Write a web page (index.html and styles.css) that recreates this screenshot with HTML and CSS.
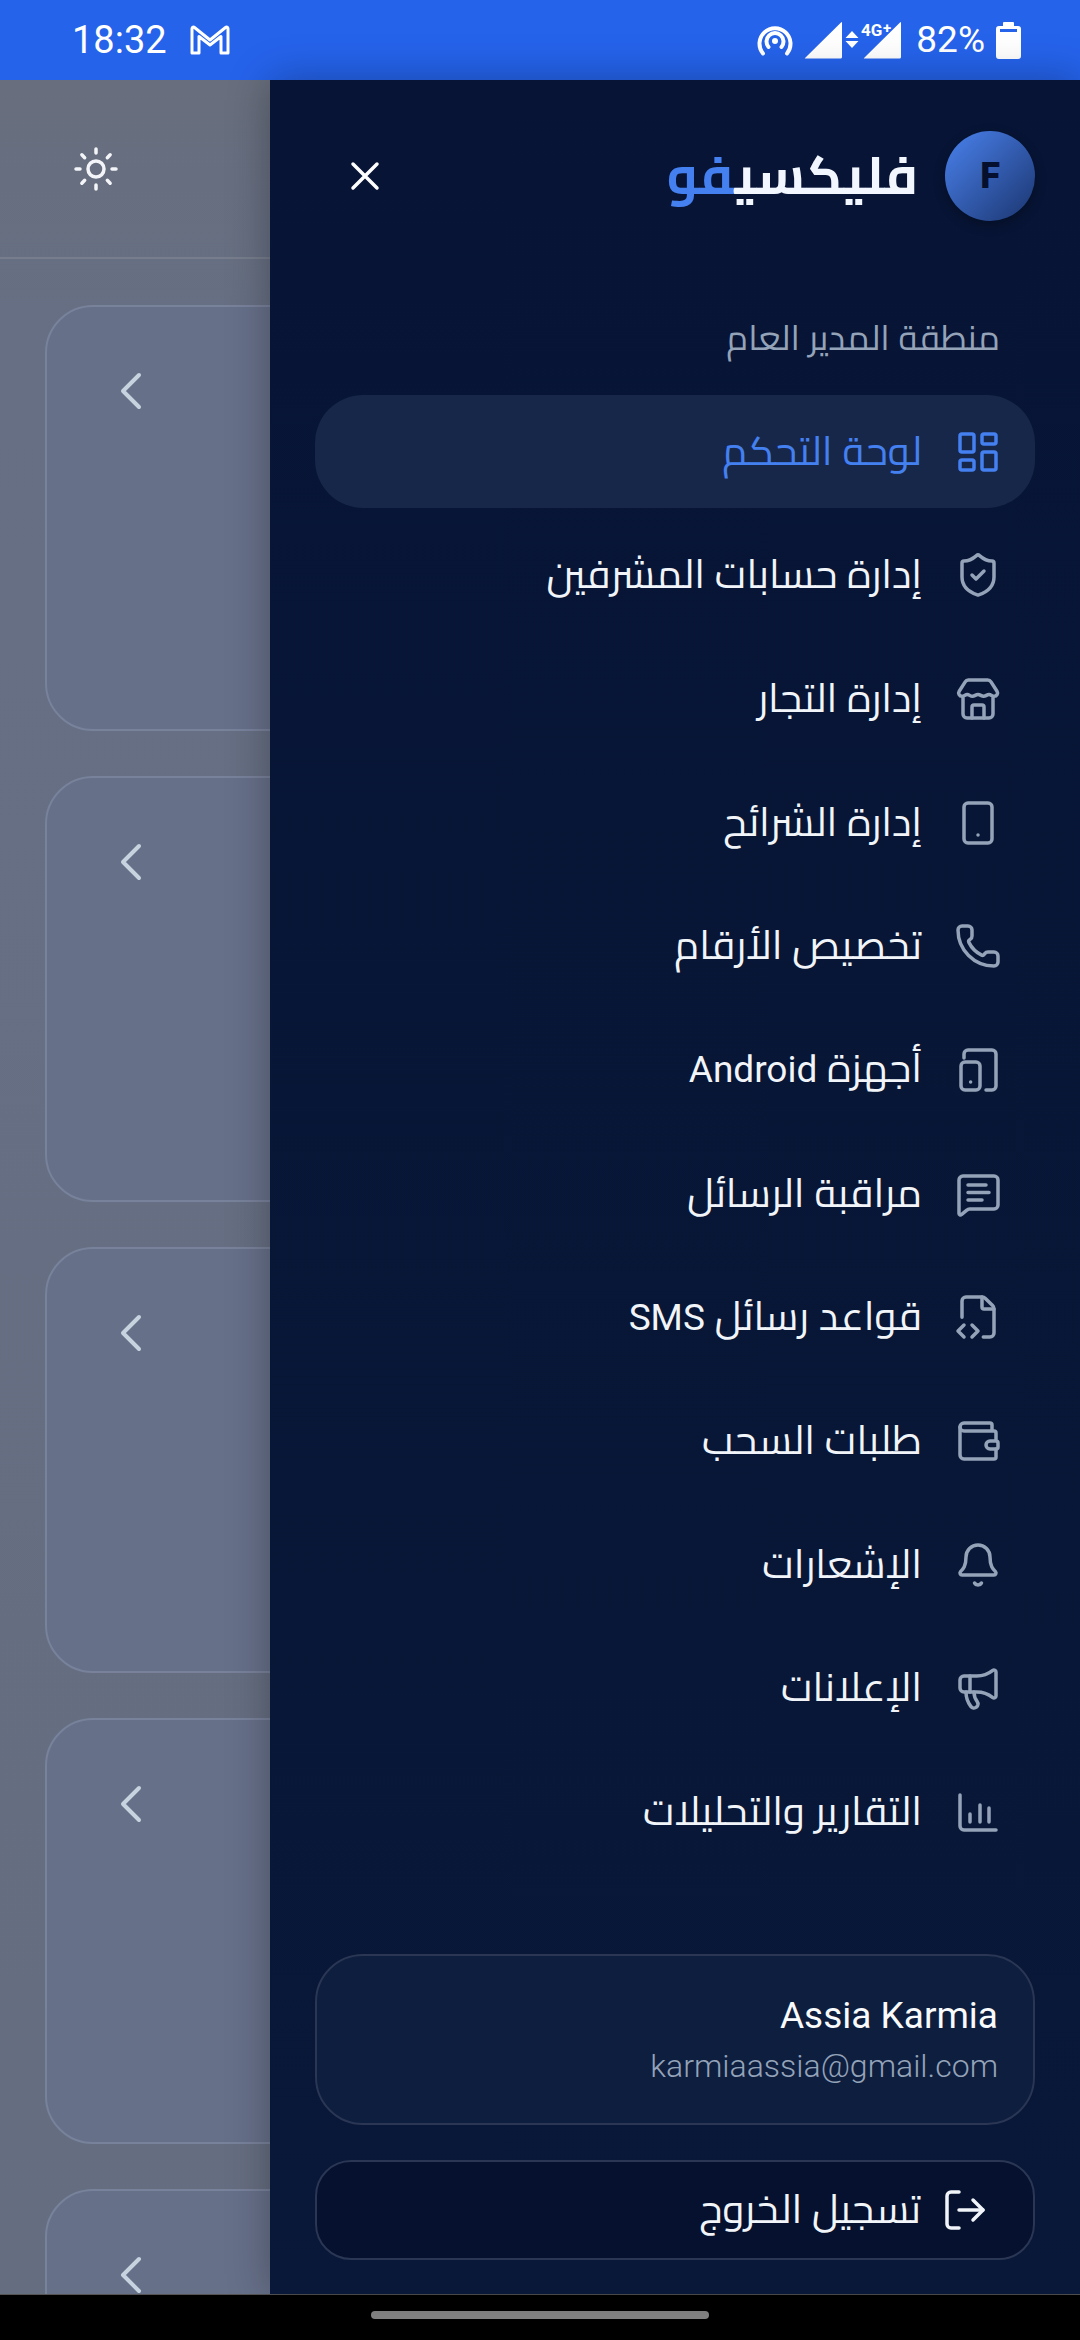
FILE: index.html
```html
<!DOCTYPE html>
<html lang="ar">
<head>
<meta charset="utf-8">
<title>فليكسيفو</title>
<link rel="stylesheet" href="styles.css">
</head>
<body>
<div class="status">
  <div class="status-left">
    <span class="time">18:32</span>
    <svg class="gm" viewBox="0 0 40 30"><path d="M2 28V3.500a1.500 1.500 0 0 1 2.500-1L20 15 35.500 2.500a1.500 1.500 0 0 1 2.500 1V28h-7V11.500L20 20 9 11.500V28z"/></svg>
  </div>
  <div class="status-right">
    <svg class="hot" viewBox="0 0 36 32"><path d="M6 29.500A15.500 15.500 0 1 1 30 29.500M11.500 23A8.500 8.500 0 1 1 24.500 23"/><circle cx="18" cy="17" r="3"/></svg>
    <svg class="sig" viewBox="0 -6 98 50">
      <path class="fill" d="M1 37 37 1.500Q38 .5 38 2V36q0 1.500-1.500 1.500H1.500Q.3 37.500 1 37z"/>
      <path class="fill" d="M48 10l6.500 7h-13zM48 27l6.500-7h-13z"/>
      <path class="fill" d="M60 37 96 1.500Q97 .5 97 2V36q0 1.500-1.500 1.500H60.500Q59.300 37.500 60 37z"/>
      <text class="g4" x="57" y="15">4G</text><text class="gplus" x="79" y="12">+</text>
    </svg>
    <span class="pct">82%</span>
    <svg class="bat" viewBox="0 0 25 37"><path class="fill" d="M8 0h9a1 1 0 0 1 1 1v3h4a3 3 0 0 1 3 3v27a3 3 0 0 1-3 3H3a3 3 0 0 1-3-3V7a3 3 0 0 1 3-3h4V1a1 1 0 0 1 1-1z"/><rect class="batline" x="4" y="7" width="17" height="3"/></svg>
  </div>
</div>
<div class="main">
  <div class="backdrop">
    <div class="bd-head">
      <svg class="ic sun" viewBox="0 0 24 24"><circle cx="12" cy="12" r="4"/><path d="M12 2v2M12 20v2M4.930 4.930l1.410 1.410M17.660 17.660l1.410 1.410M2 12h2M20 12h2M6.340 17.660l-1.410 1.410M19.070 4.930l-1.410 1.410"/></svg>
    </div>
    <div class="bd-list">
      <div class="bd-card"><svg class="chev" viewBox="0 0 24 24"><path d="m15 18-6-6 6-6"/></svg></div>
      <div class="bd-card"><svg class="chev" viewBox="0 0 24 24"><path d="m15 18-6-6 6-6"/></svg></div>
      <div class="bd-card"><svg class="chev" viewBox="0 0 24 24"><path d="m15 18-6-6 6-6"/></svg></div>
      <div class="bd-card"><svg class="chev" viewBox="0 0 24 24"><path d="m15 18-6-6 6-6"/></svg></div>
      <div class="bd-card"><svg class="chev" viewBox="0 0 24 24"><path d="m15 18-6-6 6-6"/></svg></div>
    </div>
  </div>
  <aside class="drawer" dir="rtl">
    <div class="dr-head">
      <div class="avatar">F</div>
      <div class="logo"><span class="logo-a">فليكسي</span><span class="logo-b">فو</span></div>
      <svg class="ic close" viewBox="0 0 24 24"><path d="M18 6 6 18M6 6l12 12"/></svg>
    </div>
    <div class="section">منطقة المدير العام</div>
    <nav class="nav">
      <a class="row active"><svg class="ic" viewBox="0 0 24 24"><rect x="3" y="3" width="7" height="9" rx="1"/><rect x="14" y="3" width="7" height="5" rx="1"/><rect x="14" y="12" width="7" height="9" rx="1"/><rect x="3" y="16" width="7" height="5" rx="1"/></svg><span>لوحة التحكم</span></a>
      <a class="row"><svg class="ic" viewBox="0 0 24 24"><path d="M20 13c0 5-3.500 7.500-7.660 8.950a1 1 0 0 1-.67-.01C7.500 20.500 4 18 4 13V6a1 1 0 0 1 1-1c2 0 4.500-1.200 6.240-2.720a1.170 1.170 0 0 1 1.520 0C14.510 3.810 17 5 19 5a1 1 0 0 1 1 1z"/><path d="m9 12 2 2 4-4"/></svg><span>إدارة حسابات المشرفين</span></a>
      <a class="row"><svg class="ic" viewBox="0 0 24 24"><path d="M7.200 2.500h9.600a2 2 0 0 1 1.700.95l3 4.700c.7 1.100-.1 2.500-1.400 2.500-1.100 0-1.500-.9-2.600-.9s-1.500.9-2.700.9-1.600-.9-2.800-.9-1.600.9-2.800.9-1.500-.9-2.600-.9-1.500.9-2.600.9c-1.300 0-2.100-1.400-1.400-2.500l3-4.700a2 2 0 0 1 1.600-.95z"/><path d="M4.500 11.500v8a2 2 0 0 0 2 2h11a2 2 0 0 0 2-2v-8"/><path d="M9 21.500V16a1 1 0 0 1 1-1h4a1 1 0 0 1 1 1v5.500"/></svg><span>إدارة التجار</span></a>
      <a class="row"><svg class="ic" viewBox="0 0 24 24"><rect x="5" y="2" width="14" height="20" rx="2"/><path d="M12 18h.01"/></svg><span>إدارة الشرائح</span></a>
      <a class="row"><svg class="ic" viewBox="0 0 24 24"><path d="M13.832 16.568a1 1 0 0 0 1.213-.303l.355-.465A2 2 0 0 1 17 15h3a2 2 0 0 1 2 2v3a2 2 0 0 1-2 2A18 18 0 0 1 2 4a2 2 0 0 1 2-2h3a2 2 0 0 1 2 2v3a2 2 0 0 1-.8 1.600l-.468.351a1 1 0 0 0-.292 1.233 14 14 0 0 0 6.392 6.384"/></svg><span>تخصيص الأرقام</span></a>
      <a class="row"><svg class="ic" viewBox="0 0 24 24"><rect x="3.500" y="8" width="9.500" height="14" rx="2"/><path d="M8.300 18h.01"/><path d="M5 6V4a2 2 0 0 1 2-2h12a2 2 0 0 1 2 2v16a2 2 0 0 1-2 2h-3"/></svg><span>أجهزة <i class="lat">Android</i></span></a>
      <a class="row"><svg class="ic" viewBox="0 0 24 24"><path d="M22 17.500a2 2 0 0 1-2 2H7.800a2 2 0 0 0-1.400.6l-2.700 2.200a.7.7 0 0 1-1.200-.5V5a2 2 0 0 1 2-2h15.500a2 2 0 0 1 2 2z"/><path d="M7 7.500h9M7 11.300h10.500M7 15h7"/></svg><span>مراقبة الرسائل</span></a>
      <a class="row"><svg class="ic" viewBox="0 0 24 24"><path d="M4 12.150V4a2 2 0 0 1 2-2h8a2.400 2.400 0 0 1 1.706.706l3.588 3.588A2.400 2.400 0 0 1 20 8v12a2 2 0 0 1-2 2h-3.350"/><path d="M14 2v5a1 1 0 0 0 1 1h5"/><path d="m5 16-3 3 3 3"/><path d="m9 22 3-3-3-3"/></svg><span>قواعد رسائل <i class="lat">SMS</i></span></a>
      <a class="row"><svg class="ic" viewBox="0 0 24 24"><path d="M19 7V4a1 1 0 0 0-1-1H5a2 2 0 0 0 0 4h15a1 1 0 0 1 1 1v4h-3a2 2 0 0 0 0 4h3a1 1 0 0 0 1-1v-2a1 1 0 0 0-1-1"/><path d="M3 5v14a2 2 0 0 0 2 2h15a1 1 0 0 0 1-1v-4"/></svg><span>طلبات السحب</span></a>
      <a class="row"><svg class="ic" viewBox="0 0 24 24"><path d="M10.268 21a2 2 0 0 0 3.464 0"/><path d="M3.262 15.326A1 1 0 0 0 4 17h16a1 1 0 0 0 .74-1.673C19.410 13.956 18 12.499 18 8A6 6 0 0 0 6 8c0 4.499-1.411 5.956-2.738 7.326"/></svg><span>الإشعارات</span></a>
      <a class="row"><svg class="ic" viewBox="0 0 24 24"><path d="M11 6a13 13 0 0 0 8.400-2.800A1 1 0 0 1 21 4v12a1 1 0 0 1-1.600.8A13 13 0 0 0 11 14H5a2 2 0 0 1-2-2V8a2 2 0 0 1 2-2z"/><path d="M6 14a12 12 0 0 0 2.400 7.200 2 2 0 0 0 3.200-2.400A8 8 0 0 1 10 14"/><path d="M8 6v8"/></svg><span>الإعلانات</span></a>
      <a class="row"><svg class="ic" viewBox="0 0 24 24"><path d="M3 3.500V19a2 2 0 0 0 2 2h16"/><path d="M8 17v-4M13 17V8.500M17.500 17v-7"/></svg><span>التقارير والتحليلات</span></a>
    </nav>
    <div class="footer">
      <div class="user">
        <div class="u-name">Assia Karmia</div>
        <div class="u-mail">karmiaassia@gmail.com</div>
      </div>
      <a class="logout"><svg class="ic" viewBox="0 0 24 24"><path d="M9 21H5a2 2 0 0 1-2-2V5a2 2 0 0 1 2-2h4"/><path d="m16 17 5-5-5-5"/><path d="M21 12H9"/></svg><span>تسجيل الخروج</span></a>
    </div>
  </aside>
</div>
<div class="navbar"><div class="home"></div></div>
</body>
</html>
```
FILE: styles.css
```css
* { box-sizing: border-box; }
html, body { margin: 0; padding: 0; }
body {
  width: 1080px;
  height: 2340px;
  display: flex;
  flex-direction: column;
  overflow: hidden;
  background: #000;
  font-family: Roboto, "Cairo", "Noto Sans Arabic", "Noto Kufi Arabic", "DejaVu Sans", sans-serif;
}
.status {
  height: 80px;
  flex: none;
  background: #2563eb;
  display: flex;
  align-items: center;
  justify-content: space-between;
  padding: 0 59px 0 72px;
  color: #fff;
  font-family: Roboto, sans-serif;
}
.status-left { display: flex; align-items: center; gap: 23px; }
.status-right { display: flex; align-items: center; }
.time { font-size: 38px; line-height: 40px; }
.gm { width: 40px; height: 30px; fill: none; stroke: #fff; stroke-width: 3; stroke-linejoin: round; }
.hot { width: 36px; height: 32px; margin-right: 11px; fill: #fff; }
.hot path { fill: none; stroke: #fff; stroke-width: 4; stroke-linecap: round; }
.sig { width: 98px; height: 50px; margin-right: 14px; }
.fill { fill: #fff; }
.g4 { font: 700 17px Roboto, sans-serif; fill: #fff; stroke: #2563eb; stroke-width: 2px; paint-order: stroke; }
.gplus { font: 700 15px Roboto, sans-serif; fill: #fff; stroke: #2563eb; stroke-width: 2px; paint-order: stroke; }
.pct { font-size: 37px; line-height: 40px; margin-right: 11px; }
.bat { width: 25px; height: 37px; }
.batline { fill: #2563eb; }

.main { flex: 1; min-height: 0; display: flex; }
.backdrop {
  width: 270px;
  flex: none;
  overflow: hidden;
  background: linear-gradient(180deg, #686e7d 0%, #666f84 12%, #656e80 100%);
}
.bd-head {
  height: 179px;
  border-bottom: 2px solid #777d8c;
  padding: 65px 0 0 72px;
}
.sun { color: #f3f5f8; }
.bd-list {
  padding: 46px 0 0 45px;
  display: flex;
  flex-direction: column;
  gap: 45px;
}
.bd-card {
  width: 700px;
  height: 426px;
  flex: none;
  border: 2px solid #78829b;
  border-radius: 48px;
  background: #667089;
  padding: 52px 0 0 52px;
}
.chev { display: block; width: 64px; height: 64px; fill: none; stroke: #c8d3e0; stroke-width: 1.5; stroke-linecap: round; stroke-linejoin: round; }

.drawer {
  width: 810px;
  flex: none;
  background: linear-gradient(180deg, #071435, #091838);
  padding: 51px 45px 34px;
  display: flex;
  flex-direction: column;
  box-shadow: 0 0 40px rgba(0, 0, 0, .3);
  position: relative;
}
.ic {
  display: block;
  width: 48px;
  height: 48px;
  flex: none;
  fill: none;
  stroke: currentColor;
  stroke-width: 1.75;
  stroke-linecap: round;
  stroke-linejoin: round;
}
.dr-head { display: flex; align-items: center; height: 90px; }
.avatar {
  width: 90px;
  height: 90px;
  border-radius: 50%;
  flex: none;
  background: linear-gradient(135deg, #4a82ee, #1b356f);
  box-shadow: 0 4px 12px rgba(0, 0, 0, .3);
  color: #050f2e;
  font: 900 36px/90px Roboto, sans-serif;
  text-align: center;
}
.logo { font-size: 53px; line-height: 90px; font-weight: 700; margin-right: 27px; white-space: nowrap; }
.logo-a { color: #f2f6fe; }
.logo-b { color: #4480f0; }
.close { margin-right: auto; margin-left: 26px; color: #fff; }
.section {
  color: #94a3b8;
  font-size: 35px;
  line-height: 48px;
  margin: 94px 35px 32px 0;
}
.nav { display: flex; flex-direction: column; gap: 10.7px; }
.row {
  height: 113px;
  display: flex;
  align-items: center;
  gap: 32px;
  padding-right: 33px;
  border-radius: 48px;
  color: #94a3b8;
}
.row span { color: #f1f5f9; font-size: 40px; line-height: 50px; white-space: nowrap; }
.lat { font-style: normal; font-size: 37px; }
.row.active { background: #172749; color: #4480f0; }
.row.active span { color: #4480f0; }
.footer { margin-top: auto; display: flex; flex-direction: column; gap: 35px; }
.user {
  height: 171px;
  border: 2px solid #2a3653;
  border-radius: 48px;
  background: #0e1e3f;
  padding: 0 35px;
  display: flex;
  flex-direction: column;
  justify-content: center;
  gap: 4px;
  direction: rtl;
}
.u-name { color: #f8fafc; font: 400 37px/48px Roboto, sans-serif; text-align: right; direction: ltr; }
.u-mail { color: #94a3b8; font: 300 32px/44px Roboto, sans-serif; text-align: right; direction: ltr; }
.logout {
  height: 100px;
  border: 2px solid #2a3653;
  border-radius: 36px;
  background: #05112e;
  display: flex;
  align-items: center;
  gap: 20px;
  padding-right: 44px;
  color: #f1f5f9;
}
.logout span { font-size: 40px; line-height: 50px; white-space: nowrap; }
.navbar {
  height: 46px;
  flex: none;
  background: #000;
  border-top: 1px solid #555;
  display: flex;
  justify-content: center;
  padding-top: 16px;
}
.home { width: 338px; height: 8px; border-radius: 4px; background: #868686; }
```
